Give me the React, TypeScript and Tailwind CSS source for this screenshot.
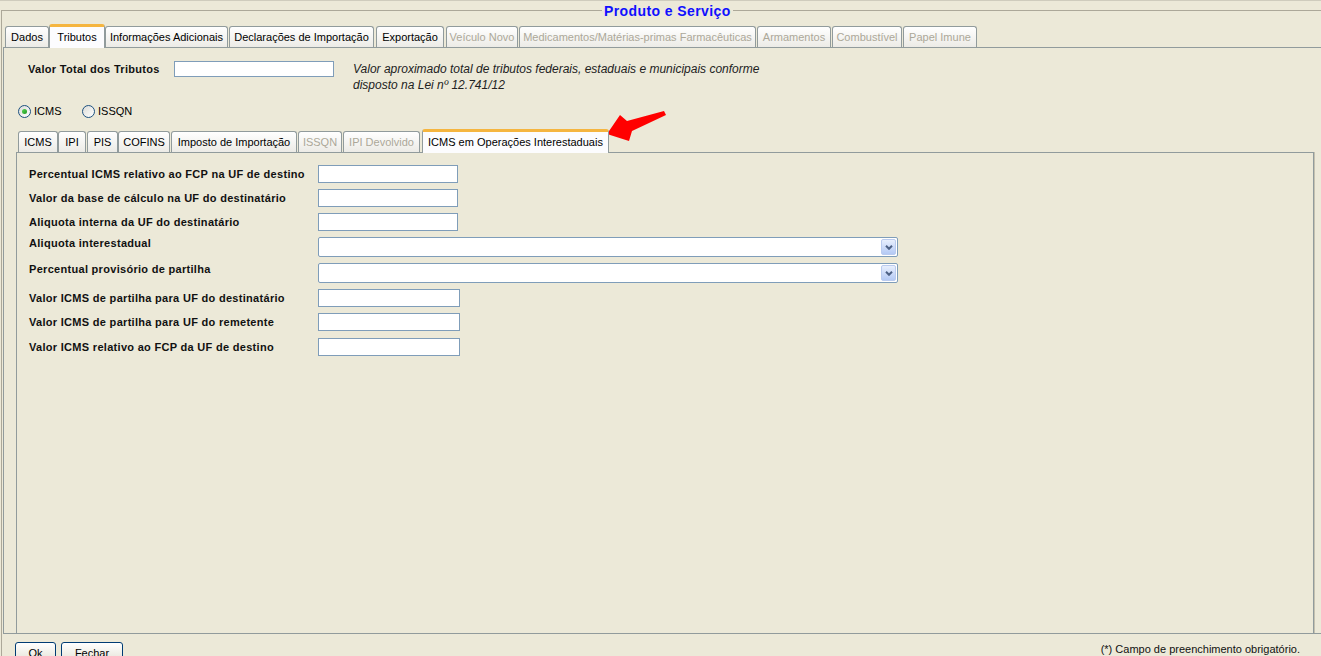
type TabItem = {
  label: string;
  w: string;
  ml: string;
  selected?: boolean;
  disabled?: boolean;
};

const mainTabs: TabItem[] = [
  { label: "Dados", w: "w-[44px]", ml: "ml-0" },
  { label: "Tributos", w: "w-[56px]", ml: "ml-0", selected: true },
  { label: "Informações Adicionais", w: "w-[123px]", ml: "ml-0" },
  { label: "Declarações de Importação", w: "w-[145px]", ml: "ml-[1px]" },
  { label: "Exportação", w: "w-[68px]", ml: "ml-[2px]" },
  { label: "Veículo Novo", w: "w-[72px]", ml: "ml-[2px]", disabled: true },
  { label: "Medicamentos/Matérias-primas Farmacêuticas", w: "w-[237px]", ml: "ml-[1px]", disabled: true },
  { label: "Armamentos", w: "w-[74px]", ml: "ml-[1px]", disabled: true },
  { label: "Combustível", w: "w-[70px]", ml: "ml-[1px]", disabled: true },
  { label: "Papel Imune", w: "w-[74px]", ml: "ml-[1px]", disabled: true },
];

const innerTabs: TabItem[] = [
  { label: "ICMS", w: "w-[40px]", ml: "ml-0" },
  { label: "IPI", w: "w-[28px]", ml: "ml-0" },
  { label: "PIS", w: "w-[31px]", ml: "ml-[1px]" },
  { label: "COFINS", w: "w-[52px]", ml: "ml-0" },
  { label: "Imposto de Importação", w: "w-[126px]", ml: "ml-[1px]" },
  { label: "ISSQN", w: "w-[44px]", ml: "ml-[1px]", disabled: true },
  { label: "IPI Devolvido", w: "w-[77px]", ml: "ml-[1px]", disabled: true },
  { label: "ICMS em Operações Interestaduais", w: "w-[187px]", ml: "ml-[2px]", selected: true },
];

const Tab = ({ tab }: { tab: TabItem }) => {
  if (tab.selected) {
    return (
      <div
        className={`${tab.w} ${tab.ml} relative z-10 -mb-px h-[24px] flex items-start justify-center pt-[4px] rounded-t-[3px] border-x border-[#919b9c] border-t-[3px] border-t-[#f5b53f] bg-[#fcfcfe] text-[11px] leading-[13px] text-black whitespace-nowrap`}
      >
        {tab.label}
      </div>
    );
  }
  return (
    <div
      className={`${tab.w} ${tab.ml} h-[21px] flex items-center justify-center rounded-t-[3px] border border-b-0 border-[#919b9c] bg-linear-to-b from-white to-[#ecebe6] text-[11px] leading-[13px] whitespace-nowrap ${
        tab.disabled ? "text-[#aca899]" : "text-black"
      }`}
    >
      {tab.label}
    </div>
  );
};

const Radio = ({ checked }: { checked?: boolean }) => (
  <div className="w-[13px] h-[13px] rounded-full border border-[#1c5180] bg-linear-to-br from-[#dcdcd7] to-white flex items-center justify-center">
    {checked && <div className="w-[5px] h-[5px] rounded-full bg-linear-to-br from-[#55d355] to-[#1f9a1f]" />}
  </div>
);

const TextField = ({ w }: { w: string }) => (
  <div className={`${w} h-[18px] bg-white border border-[#7f9db9]`} />
);

const Combo = () => (
  <div className="w-[580px] h-[20px] bg-white border border-[#7f9db9] rounded-[2px] flex items-center justify-end pr-[1px]">
    <div className="w-[15px] h-[16px] rounded-[2px] border border-[#bacbef] bg-linear-to-b from-[#e8effd] to-[#b4c9f4] flex items-center justify-center">
      <svg width="8" height="5" viewBox="0 0 8 5">
        <path d="M1 0.8 L4 3.8 L7 0.8" fill="none" stroke="#4d6185" strokeWidth="2" />
      </svg>
    </div>
  </div>
);

const labelCls =
  "w-[289px] shrink-0 font-bold text-[11px] tracking-[0.3px] text-[#111] whitespace-nowrap";

const App = () => {
  return (
    <div className="relative w-[1321px] h-[656px] overflow-hidden bg-[#ece9d8] border-t border-[#cfccbd] pl-[1px] flex flex-col font-['Liberation_Sans',Arial,sans-serif] text-black">
      {/* titulo */}
      <div className="flex h-[19px] shrink-0">
        <div className="w-[601px] h-[10px] self-end border-t border-l border-[#aca899]" />
        <span className="px-[2px] pt-[2px] font-bold text-[14px] leading-[17px] tracking-[0.4px] text-[#1010ff]">
          Produto e Serviço
        </span>
        <div className="flex-1 h-[10px] self-end border-t border-[#aca899]" />
      </div>

      <div className="flex-1 flex flex-col border-l border-[#aca899]">
        <div className="mt-[4px] h-[23px] flex items-end pl-[3px]">
          {mainTabs.map((t) => (
            <Tab key={t.label} tab={t} />
          ))}
        </div>

        <div className="ml-[1px] h-[587px] shrink-0 flex flex-col border-t border-l border-b border-[#919b9c]">
          {/* valor total */}
          <div className="mt-[13px] pl-[24px] flex items-start">
            <div className="w-[146px] font-bold text-[11px] leading-[16px] tracking-[0.3px] text-[#111]">
              Valor Total dos Tributos
            </div>
            <div className="w-[160px] h-[16px] bg-white border border-[#7f9db9]" />
            <div className="ml-[19px] italic text-[12px] leading-[16px] text-[#222]">
              <div>Valor aproximado total de tributos federais, estaduais e municipais conforme</div>
              <div>disposto na Lei nº 12.741/12</div>
            </div>
          </div>

          {/* radios */}
          <div className="mt-[11px] h-[14px] pl-[14px] flex items-center text-[11px]">
            <div className="w-[64px] flex items-center gap-[3px]">
              <Radio checked />
              <span>ICMS</span>
            </div>
            <div className="flex items-center gap-[3px]">
              <Radio />
              <span>ISSQN</span>
            </div>
          </div>

          {/* abas internas */}
          <div className="mt-[11px] ml-[12px] flex-1 flex flex-col">
            <div className="h-[23px] flex items-end pl-[2px]">
              {innerTabs.map((t) => (
                <Tab key={t.label} tab={t} />
              ))}
            </div>
            <div className="w-[1298px] flex-1 border-t border-x border-[#919b9c] shadow-[1px_0_0_#c4c1b0] pt-[12px] pl-[12px] flex flex-col gap-[6px]">
              <div className="h-[18px] flex items-center">
                <div className={labelCls}>Percentual ICMS relativo ao FCP na UF de destino</div>
                <TextField w="w-[140px]" />
              </div>
              <div className="h-[18px] flex items-center">
                <div className={labelCls}>Valor da base de cálculo na UF do destinatário</div>
                <TextField w="w-[140px]" />
              </div>
              <div className="h-[18px] flex items-center">
                <div className={labelCls}>Aliquota interna da UF do destinatário</div>
                <TextField w="w-[140px]" />
              </div>
              <div className="h-[20px] flex items-start">
                <div className={`${labelCls} leading-[12px]`}>Aliquota interestadual</div>
                <Combo />
              </div>
              <div className="h-[20px] flex items-start">
                <div className={`${labelCls} leading-[12px]`}>Percentual provisório de partilha</div>
                <Combo />
              </div>
              <div className="h-[18px] flex items-center">
                <div className={labelCls}>Valor ICMS de partilha para UF do destinatário</div>
                <TextField w="w-[142px]" />
              </div>
              <div className="h-[18px] flex items-center">
                <div className={labelCls}>Valor ICMS de partilha para UF do remetente</div>
                <TextField w="w-[142px]" />
              </div>
              <div className="mt-[1px] h-[18px] flex items-center">
                <div className={labelCls}>Valor ICMS relativo ao FCP da UF de destino</div>
                <TextField w="w-[142px]" />
              </div>
            </div>
          </div>
        </div>

        {/* rodape */}
        <div className="flex items-start justify-between pl-[13px] pr-[21px]">
          <div className="mt-[8px] flex gap-[5px]">
            <button className="w-[41px] h-[22px] rounded-[3px] border border-[#003c74] bg-linear-to-b from-white to-[#e3e0d3] text-[11px] leading-[13px]">
              Ok
            </button>
            <button className="w-[62px] h-[22px] rounded-[3px] border border-[#003c74] bg-linear-to-b from-white to-[#e3e0d3] text-[11px] leading-[13px]">
              Fechar
            </button>
          </div>
          <div className="mt-[9px] text-[11px] leading-[12px] text-[#111]">
            (*) Campo de preenchimento obrigatório.
          </div>
        </div>
      </div>

      {/* seta vermelha */}
      <svg className="absolute left-[600px] top-[105px]" width="70" height="40" viewBox="0 0 70 40">
        <polygon points="7,28 20,9 27,15 64,5 66,9 32,25 29,35" fill="#f00" />
      </svg>
    </div>
  );
};

export default App;
